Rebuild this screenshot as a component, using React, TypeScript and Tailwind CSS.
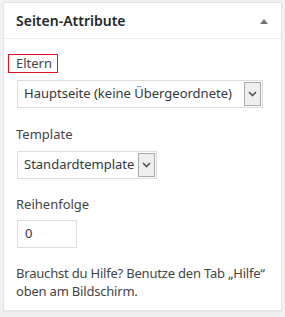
import React from "react";

function Chevron() {
  return (
    <svg width="9" height="6" viewBox="0 0 9 6" className="block">
      <path d="M1 1 L4.5 4.5 L8 1" fill="none" stroke="#555" strokeWidth="1.6" />
    </svg>
  );
}

function Select({ text, width }: { text: string; width: string }) {
  return (
    <div className={`flex h-[28px] items-stretch border border-[#dddddd] bg-white ${width}`}>
      <div className="flex flex-1 items-center pl-[6px] text-[13px] text-[#32373c]">{text}</div>
      <div className="my-[1px] mr-[1px] flex w-[17px] items-center justify-center border border-[#a9a9a9] bg-[#efefef]">
        <Chevron />
      </div>
    </div>
  );
}

export default function App() {
  return (
    <div
      className="h-[317px] w-[285px] bg-[#f1f1f1] pl-[3px] pr-[3px] pt-[2px]"
      style={{ fontFamily: '"Noto Sans", "Open Sans", sans-serif' }}
    >
      <div className="h-[309px] border border-[#e5e5e5] bg-white shadow-[0_1px_1px_rgba(0,0,0,0.04)]">
        <div className="flex h-[36px] items-center justify-between border-b border-[#eeeeee] pl-[12px] pr-[13px]">
          <span className="text-[14px] font-semibold text-[#23282d]">Seiten-Attribute</span>
          <svg width="8" height="5" viewBox="0 0 8 5" className="mt-[1px]">
            <path d="M0 5 L4 0 L8 5 Z" fill="#72777c" />
          </svg>
        </div>
        <div className="px-[12px] pt-[15px] text-[13px] text-[#444444]">
          <div className="-ml-[8px] flex h-[19px] w-[50px] items-center border border-[#e0141e] pl-[7px] leading-none">
            Eltern
          </div>
          <div className="mt-[7px] pl-[1px]">
            <Select text="Hauptseite (keine Übergeordnete)" width="w-[246px]" />
          </div>
          <div className="mt-[17px] leading-[18px]">Template</div>
          <div className="mt-[8px] pl-[1px]">
            <Select text="Standardtemplate" width="w-[140px]" />
          </div>
          <div className="mt-[16px] leading-[18px]">Reihenfolge</div>
          <div className="mt-[7px] pl-[1px]">
            <div className="flex h-[28px] w-[60px] items-center border border-[#dddddd] pl-[7px] text-[#32373c]">0</div>
          </div>
          <p className="-mr-[6px] mt-[16px] leading-[18px] tracking-[-0.2px]">
            Brauchst du Hilfe? Benutze den Tab „Hilfe“ oben am Bildschirm.
          </p>
        </div>
      </div>
    </div>
  );
}
